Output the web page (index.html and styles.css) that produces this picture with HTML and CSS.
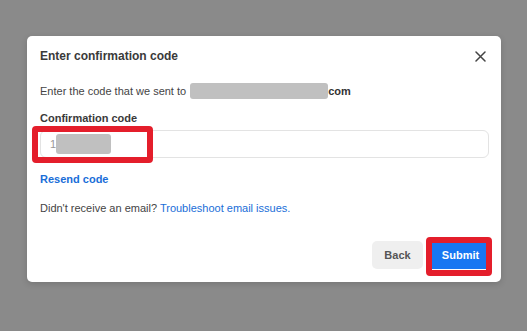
FILE: index.html
```html
<!DOCTYPE html>
<html lang="en">
<head>
    <meta charset="UTF-8">
    <meta name="viewport" content="width=device-width, initial-scale=1.0">
    <title>Enter confirmation code</title>
    <link rel="stylesheet" href="styles.css">
</head>
<body>

<div class="dialog">
    <div class="dialog-header">
        <h2>Enter confirmation code</h2>
        <button class="close" aria-label="Close">
            <svg width="11" height="11" viewBox="0 0 11 11">
                <path d="M1 1L10 10M10 1L1 10" stroke="#444" stroke-width="1.5" stroke-linecap="round"/>
            </svg>
        </button>
    </div>

    <p class="sent-to">Enter the code that we sent to <span class="redact email"></span><b>com</b></p>

    <div class="form-group">
        <label for="code">Confirmation code</label>
        <div class="input-wrap">
            <div class="code-input" id="code">1<span class="redact code"></span></div>
            <div class="highlight input-highlight"></div>
        </div>
    </div>

    <a class="resend" href="#">Resend code</a>

    <p class="help">Didn't receive an email? <a href="#">Troubleshoot email issues.</a></p>

    <div class="dialog-footer">
        <button class="btn btn-back">Back</button>
        <div class="submit-wrap">
            <button class="btn btn-submit">Submit</button>
            <div class="highlight submit-highlight"></div>
        </div>
    </div>
</div>

</body>
</html>
```

FILE: styles.css
```css
body {
    font-family: "Liberation Sans", Arial, sans-serif;
    background-color: #8a8a8a;
    margin: 0;
    height: 331px;
    overflow: hidden;
}
.dialog {
    background-color: #fff;
    margin: 36px 0 0 27px;
    width: 474px;
    box-sizing: border-box;
    padding: 12px 12px 13px 13px;
    border-radius: 5px;
    box-shadow: 0 2px 6px rgba(0, 0, 0, 0.15);
    color: #444;
}
.dialog-header {
    display: flex;
    justify-content: space-between;
    align-items: center;
    height: 16px;
}
.dialog-header h2 {
    margin: 0;
    font-size: 12px;
    line-height: 16px;
    font-weight: bold;
    color: #3a3a3a;
}
.close {
    border: none;
    background: none;
    padding: 0;
    margin-right: 3px;
    width: 11px;
    height: 11px;
    display: flex;
}
.sent-to {
    margin: 19px 0 0;
    font-size: 11px;
    line-height: 16px;
    display: flex;
    align-items: center;
}
.sent-to b {
    color: #333;
}
.redact {
    display: inline-block;
    background-color: #c0c0c0;
    border-radius: 3px;
}
.redact.email {
    width: 138px;
    height: 16px;
    margin-left: 4px;
}
.form-group {
    margin-top: 11px;
}
.form-group label {
    display: block;
    font-size: 11px;
    line-height: 16px;
    font-weight: bold;
    color: #3a3a3a;
    margin-bottom: 4px;
}
.input-wrap {
    position: relative;
}
.code-input {
    height: 28px;
    box-sizing: border-box;
    border: 1px solid #e3e3e3;
    border-radius: 6px;
    padding: 0 9px;
    display: flex;
    align-items: center;
    font-size: 11px;
    color: #999;
}
.redact.code {
    width: 55px;
    height: 20px;
}
.highlight {
    position: absolute;
    border: 6px solid #e41e2b;
    border-radius: 4px;
    box-sizing: border-box;
}
.input-highlight {
    left: -8px;
    top: -4px;
    width: 121px;
    height: 37px;
}
.resend {
    display: block;
    margin-top: 13px;
    font-size: 11px;
    line-height: 16px;
    font-weight: bold;
    color: #1a6ed8;
    text-decoration: none;
}
.help {
    margin: 13px 0 0;
    font-size: 11px;
    line-height: 16px;
}
.help a {
    color: #1a6ed8;
    text-decoration: none;
}
.dialog-footer {
    display: flex;
    justify-content: flex-end;
    gap: 9px;
    margin-top: 25px;
}
.btn {
    height: 28px;
    border: none;
    border-radius: 5px;
    font-family: inherit;
    font-size: 11px;
    font-weight: bold;
    cursor: pointer;
}
.btn-back {
    width: 51px;
    background-color: #efefef;
    color: #555;
}
.submit-wrap {
    position: relative;
    display: flex;
}
.btn-submit {
    width: 57px;
    background-color: #1877f2;
    color: #fff;
    border-radius: 0;
}
.submit-highlight {
    left: -6px;
    top: -4px;
    width: 66px;
    height: 39px;
}
```
